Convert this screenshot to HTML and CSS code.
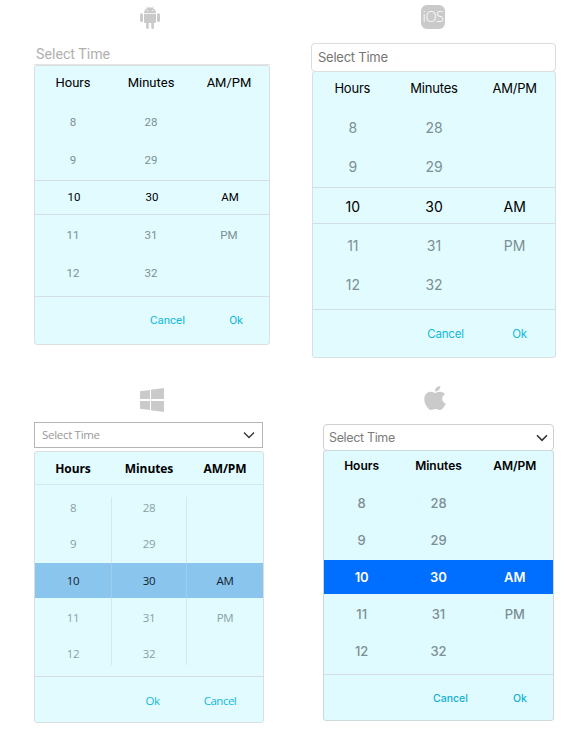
FILE: index.html
```html
<!DOCTYPE html>
<html lang="en">
<head>
<meta charset="utf-8">
<title>Time picker platforms</title>
<link rel="stylesheet" href="styles.css">
</head>
<body>
<main class="gallery">
  <section class="platform android">
    <svg class="logo" viewBox="0 0 20 24"><path d="M4 7.800h12v8q0 1.200-1.200 1.200h-.9v4.700q0 1.300-1.300 1.300t-1.300-1.300V17H8.700v4.700q0 1.300-1.300 1.300t-1.300-1.300V17h-.9Q4 17 4 15.800z"/><path d="M4 7Q4.200 3.500 7.200 2L6.100.3l.3-.2L7.700 1.700q2.300-.8 4.600 0L13.600.1l.3.200L12.800 2Q15.800 3.500 16 7z"/><rect x="0" y="7.300" width="3" height="8.700" rx="1.500"/><rect x="17" y="7.300" width="3" height="8.700" rx="1.500"/><circle class="cut" cx="7.200" cy="4.600" r=".7"/><circle class="cut" cx="12.800" cy="4.600" r=".7"/></svg>
    <div class="field"><span>Select Time</span></div>
    <div class="panel">
      <div class="row head"><span>Hours</span><span>Minutes</span><span>AM/PM</span></div>
      <div class="wheel">
        <div class="row"><span>8</span><span>28</span><span></span></div>
        <div class="row"><span>9</span><span>29</span><span></span></div>
        <div class="row selected"><span>10</span><span>30</span><span>AM</span></div>
        <div class="row"><span>11</span><span>31</span><span>PM</span></div>
        <div class="row"><span>12</span><span>32</span><span></span></div>
      </div>
      <div class="actions"><span>Cancel</span><span>Ok</span></div>
    </div>
  </section>

  <section class="platform ios">
    <div class="logo ios-logo"><span>iOS</span></div>
    <div class="field"><span>Select Time</span></div>
    <div class="panel">
      <div class="row head"><span>Hours</span><span>Minutes</span><span>AM/PM</span></div>
      <div class="wheel">
        <div class="row"><span>8</span><span>28</span><span></span></div>
        <div class="row"><span>9</span><span>29</span><span></span></div>
        <div class="row selected"><span>10</span><span>30</span><span>AM</span></div>
        <div class="row"><span>11</span><span>31</span><span>PM</span></div>
        <div class="row"><span>12</span><span>32</span><span></span></div>
      </div>
      <div class="actions"><span>Cancel</span><span>Ok</span></div>
    </div>
  </section>

  <section class="platform windows">
    <svg class="logo" viewBox="0 0 24 24"><path d="M0 3.300 10 2v9H0zM11 1.800 24 0v11H11zM0 13h10v9L0 20.800zM11 13h13v11l-13-1.800z"/></svg>
    <div class="field"><span>Select Time</span><svg class="chevron" viewBox="0 0 12 8"><path d="M1 1.500 6 6.500 11 1.500"/></svg></div>
    <div class="panel">
      <div class="row head"><span>Hours</span><span>Minutes</span><span>AM/PM</span></div>
      <div class="wheel">
        <div class="row"><span>8</span><span>28</span><span></span></div>
        <div class="row"><span>9</span><span>29</span><span></span></div>
        <div class="row selected"><span>10</span><span>30</span><span>AM</span></div>
        <div class="row"><span>11</span><span>31</span><span>PM</span></div>
        <div class="row"><span>12</span><span>32</span><span></span></div>
      </div>
      <div class="actions"><span>Ok</span><span>Cancel</span></div>
    </div>
  </section>

  <section class="platform mac">
    <svg class="logo" viewBox="2 0 20 24" preserveAspectRatio="none"><path d="M12.152 6.896c-.948 0-2.415-1.078-3.960-1.040-2.040.027-3.910 1.183-4.961 3.014-2.117 3.675-.546 9.103 1.519 12.090 1.013 1.454 2.208 3.090 3.792 3.039 1.520-.065 2.090-.987 3.935-.987 1.831 0 2.350.987 3.960.948 1.637-.026 2.676-1.480 3.676-2.948 1.156-1.688 1.636-3.325 1.662-3.415-.039-.013-3.182-1.221-3.220-4.857-.026-3.040 2.480-4.494 2.597-4.559-1.429-2.090-3.623-2.324-4.390-2.376-2-.156-3.675 1.090-4.610 1.090zM15.530 3.830c.843-1.012 1.400-2.427 1.245-3.830-1.207.052-2.662.805-3.532 1.818-.780.896-1.454 2.338-1.273 3.714 1.338.104 2.715-.688 3.559-1.701"/></svg>
    <div class="field"><span>Select Time</span><svg class="chevron" viewBox="0 0 12 8"><path d="M1 1.200 6 6.300 11 1.200"/></svg></div>
    <div class="panel">
      <div class="row head"><span>Hours</span><span>Minutes</span><span>AM/PM</span></div>
      <div class="wheel">
        <div class="row"><span>8</span><span>28</span><span></span></div>
        <div class="row"><span>9</span><span>29</span><span></span></div>
        <div class="row selected"><span>10</span><span>30</span><span>AM</span></div>
        <div class="row"><span>11</span><span>31</span><span>PM</span></div>
        <div class="row"><span>12</span><span>32</span><span></span></div>
      </div>
      <div class="actions"><span>Cancel</span><span>Ok</span></div>
    </div>
  </section>
</main>
</body>
</html>
```
FILE: styles.css
```css
* { box-sizing: border-box; }
body { margin: 0; background: #fff; color: #000; }
.gallery {
  display: grid;
  grid-template-columns: 294px 294px;
  grid-template-rows: 386px 354px;
  width: 588px;
  height: 740px;
}
.platform { display: flex; flex-direction: column; align-items: flex-start; }
.logo { display: block; width: 24px; height: 24px; fill: #cacaca; flex: none; }
.logo .cut { fill: #fff; }
.field { display: flex; align-items: center; justify-content: space-between; flex: none; white-space: nowrap; }
.chevron { fill: none; stroke: #333; stroke-width: 1.3; width: 12px; height: 8px; }
.panel {
  flex: none;
  display: flex;
  flex-direction: column;
  background: #e2fbff;
  border: 1px solid #dadfe0;
  border-radius: 3px;
}
.row { display: grid; grid-template-columns: repeat(3, 1fr); align-items: center; text-align: center; height: var(--pitch); color: var(--muted); }
.head { height: var(--head); color: #000; flex: none; }
.wheel { padding-top: var(--lead); flex: 1; font-size: var(--digit); }
.selected { position: relative; color: #000; }
.selected::before {
  content: "";
  position: absolute;
  inset: var(--band-inset);
  border: solid #d3dfe2;
  border-width: 1px 0;
}
.selected span { position: relative; }
.actions { display: flex; justify-content: flex-end; align-items: center; text-align: center; border-top: 1px solid #d3dfe2; color: #12b8da; flex: none; }

.android { font-family: Roboto, sans-serif; padding: 6px 0 0 34px; --pitch: 37.7px; --head: 33px; --lead: 4px; --digit: 11.5px; --muted: #7c8f93; --band-inset: 1.5px 0; }
.android .logo { margin-left: 106px; width: 20px; }
.android .field { width: 236px; height: 35px; padding: 14px 2px 0; border-bottom: 1px solid #e3e3e3; font-size: 14.2px; color: #b0b0b0; }
.android .panel { width: 236px; height: 280px; }
.android .row { margin-right: 1px; margin-left: -1px; }
.android .selected { margin: 0; }
.android .head { font-size: 13px; }
.android .actions { height: 48px; font-size: 11.5px; }
.android .actions span { margin-top: -1px; }
.android .actions span:first-child { width: 71px; }
.android .actions span:last-child { width: 66px; }

.ios { font-family: Inter, sans-serif; padding: 5px 0 0 17px; --pitch: 39.1px; --head: 32px; --lead: 4.3px; --digit: 14px; --muted: #7c8f93; --band-inset: 1px 0 2px; }
.ios-logo { margin-left: 110px; background: #cacaca; border-radius: 6px; color: #fff; text-align: center; white-space: nowrap; font: 300 14.5px/24px "Open Sans", sans-serif; letter-spacing: -0.5px; }
.ios .field { margin-top: 14px; width: 245px; height: 29px; padding: 0 6px; border: 1px solid #dcdcdc; border-radius: 4px; font-size: 13px; letter-spacing: -0.25px; color: #757575; }
.ios .field span { margin-top: -1px; }
.ios .panel { width: 244px; height: 287px; margin: -1px 0 0 1px; }
.ios .head { font-size: 13px; letter-spacing: -0.2px; }
.ios .head span:first-child { margin-left: -2px; }
.ios .wheel .row span:first-child { margin-left: -1px; }
.ios .actions { height: 48px; font-size: 11.5px; letter-spacing: -0.2px; }
.ios .actions span:first-child { width: 77px; }
.ios .actions span:last-child { width: 71px; }

.windows { font-family: "Open Sans", sans-serif; padding: 2px 0 0 34px; --pitch: 36.6px; --head: 33px; --lead: 4px; --digit: 11.5px; --muted: #8a9fa4; --band-inset: 1px 0; }
.windows .logo { margin-left: 106px; }
.windows .field { margin-top: 10px; width: 229px; height: 26px; padding: 0 7px; border: 1px solid #b5b5b5; font-size: 11.5px; letter-spacing: -0.3px; color: #999; }
.windows .field span { margin-top: -2px; }
.windows .panel { width: 230px; height: 272px; margin-top: 3px; }
.windows .head { font-size: 12px; font-weight: 700; letter-spacing: -0.1px; border-bottom: 1px solid #d3e8ef; }
.windows .wheel {
  letter-spacing: -0.4px;
  background:
    linear-gradient(#d3e8ef, #d3e8ef) 76px 12px / 1px 168px no-repeat,
    linear-gradient(#d3e8ef, #d3e8ef) 151px 12px / 1px 168px no-repeat;
}
.windows .selected { color: #13222d; }
.windows .selected::before {
  border: 0;
  background:
    linear-gradient(#a0cde8, #a0cde8) 76px 0 / 1px 100% no-repeat,
    linear-gradient(#a0cde8, #a0cde8) 151px 0 / 1px 100% no-repeat,
    #89c5ed;
}
.windows .actions { height: 46px; font-size: 11.5px; letter-spacing: -0.5px; }
.windows .actions span { margin-top: 1px; }
.windows .actions span:first-child { width: 49px; }
.windows .actions span:last-child { width: 86px; }

.mac { font-family: Inter, sans-serif; padding: 0 0 0 29px; --pitch: 36.9px; --head: 29px; --lead: 5px; --digit: 13px; --muted: #7c8f93; --band-inset: 1.5px 0; }
.mac .logo { margin-left: 101px; width: 22px; }
.mac .field { margin-top: 14px; width: 231px; height: 27px; padding: 0 5px; border: 1px solid #d0d0d0; border-radius: 4px; font-size: 12.5px; letter-spacing: -0.35px; color: #7c7c7c; }
.mac .chevron { stroke-width: 1.6; }
.mac .panel { width: 231px; height: 271px; margin-top: -1px; background: #e0fbff; border-color: #ced9db; }
.mac .head { font-size: 12px; font-weight: 600; }
.mac .head span:first-child, .mac .wheel .row span:first-child { margin-left: -1px; }
.mac .wheel { font-weight: 500; }
.mac .selected { color: #fff; font-weight: 600; }
.mac .selected::before { background: #006eff; border: 0; }
.mac .actions { height: 46px; font-size: 10.5px; font-weight: 500; color: #12b0d2; }
.mac .actions span { margin-top: 1px; }
.mac .actions span:first-child { width: 73px; }
.mac .actions span:last-child { width: 66px; }
```
